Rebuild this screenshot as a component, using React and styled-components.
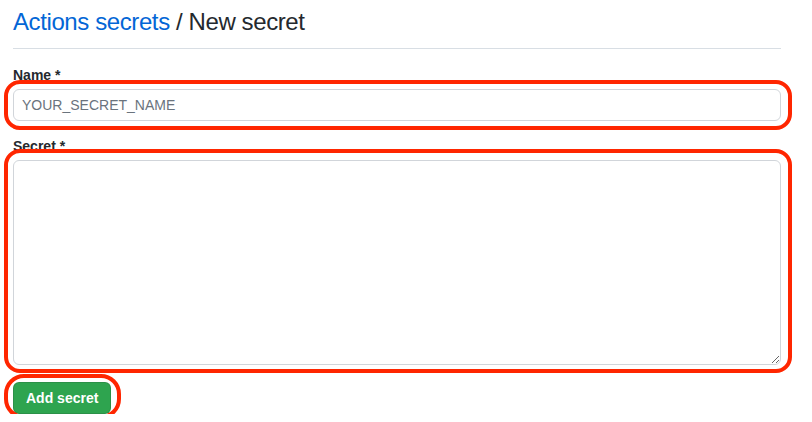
import React from "react";
import styled, { createGlobalStyle } from "styled-components";

const GlobalStyle = createGlobalStyle`
  body {
    margin: 0;
    background: #fff;
    font-family: "Liberation Sans", Arial, sans-serif;
    color: #24292e;
  }
`;

const Page = styled.div`
  width: 768px;
  padding: 4px 31px 0 13px;
`;

const Header = styled.div`
  padding-bottom: 8px;
  border-bottom: 1px solid #d8dee4;
`;

const Title = styled.h2`
  margin: 0;
  font-size: 24px;
  font-weight: 400;
  line-height: 36px;
  letter-spacing: -0.4px;
  color: #24292e;
`;

const Crumb = styled.a`
  color: #0366d6;
  text-decoration: none;
`;

const Form = styled.form`
  margin-top: 16px;
`;

const Field = styled.div`
  margin-bottom: ${(p) => p.$gap || "15px"};
`;

const Label = styled.label`
  display: block;
  margin-bottom: 4px;
  font-size: 14px;
  font-weight: 700;
  line-height: 20px;
  color: #24292e;
`;

// red callout drawn over the page, like a hand-made annotation
const Marked = styled.div`
  position: relative;

  &::after {
    content: "";
    position: absolute;
    inset: ${(p) => p.$inset};
    border: 4px solid #ff2600;
    border-radius: ${(p) => p.$radius || "16px"};
    pointer-events: none;
  }
`;

const Input = styled.input`
  display: block;
  box-sizing: border-box;
  width: 100%;
  height: 32px;
  padding: 5px 8px;
  font-family: inherit;
  font-size: 14px;
  line-height: 20px;
  color: #24292e;
  background: #fff;
  border: 1px solid #d1d5da;
  border-radius: 6px;
  outline: none;

  &::placeholder {
    color: #6a737d;
  }
`;

const TextArea = styled.textarea`
  display: block;
  box-sizing: border-box;
  width: 100%;
  height: 205px;
  padding: 8px;
  font-family: inherit;
  font-size: 14px;
  color: #24292e;
  background: #fff;
  border: 1px solid #d1d5da;
  border-radius: 6px;
  resize: vertical;
  outline: none;
`;

const Actions = styled.div`
  display: flex;
`;

const Button = styled.button`
  box-sizing: border-box;
  height: 32px;
  padding: 5px 12px;
  font-family: inherit;
  font-size: 14px;
  font-weight: 700;
  line-height: 20px;
  color: #fff;
  background: #2ea44f;
  border: 1px solid rgba(27, 31, 35, 0.15);
  border-radius: 6px;
  cursor: pointer;
`;

export default function App() {
  return (
    <>
      <GlobalStyle />
      <Page>
        <Header>
          <Title>
            <Crumb href="#">Actions secrets</Crumb> / New secret
          </Title>
        </Header>

        <Form onSubmit={(e) => e.preventDefault()}>
          <Field>
            <Label htmlFor="secret_name">Name *</Label>
            <Marked $inset="-9px -11px -9px -9px">
              <Input id="secret_name" placeholder="YOUR_SECRET_NAME" />
            </Marked>
          </Field>

          <Field $gap="17px">
            <Label htmlFor="secret_value">Secret *</Label>
            <Marked $inset="-11px -11px -8px -9px">
              <TextArea id="secret_value" />
            </Marked>
          </Field>

          <Actions>
            <Marked $inset="-8px -10px -5px -9px" $radius="20px">
              <Button type="submit">Add secret</Button>
            </Marked>
          </Actions>
        </Form>
      </Page>
    </>
  );
}
